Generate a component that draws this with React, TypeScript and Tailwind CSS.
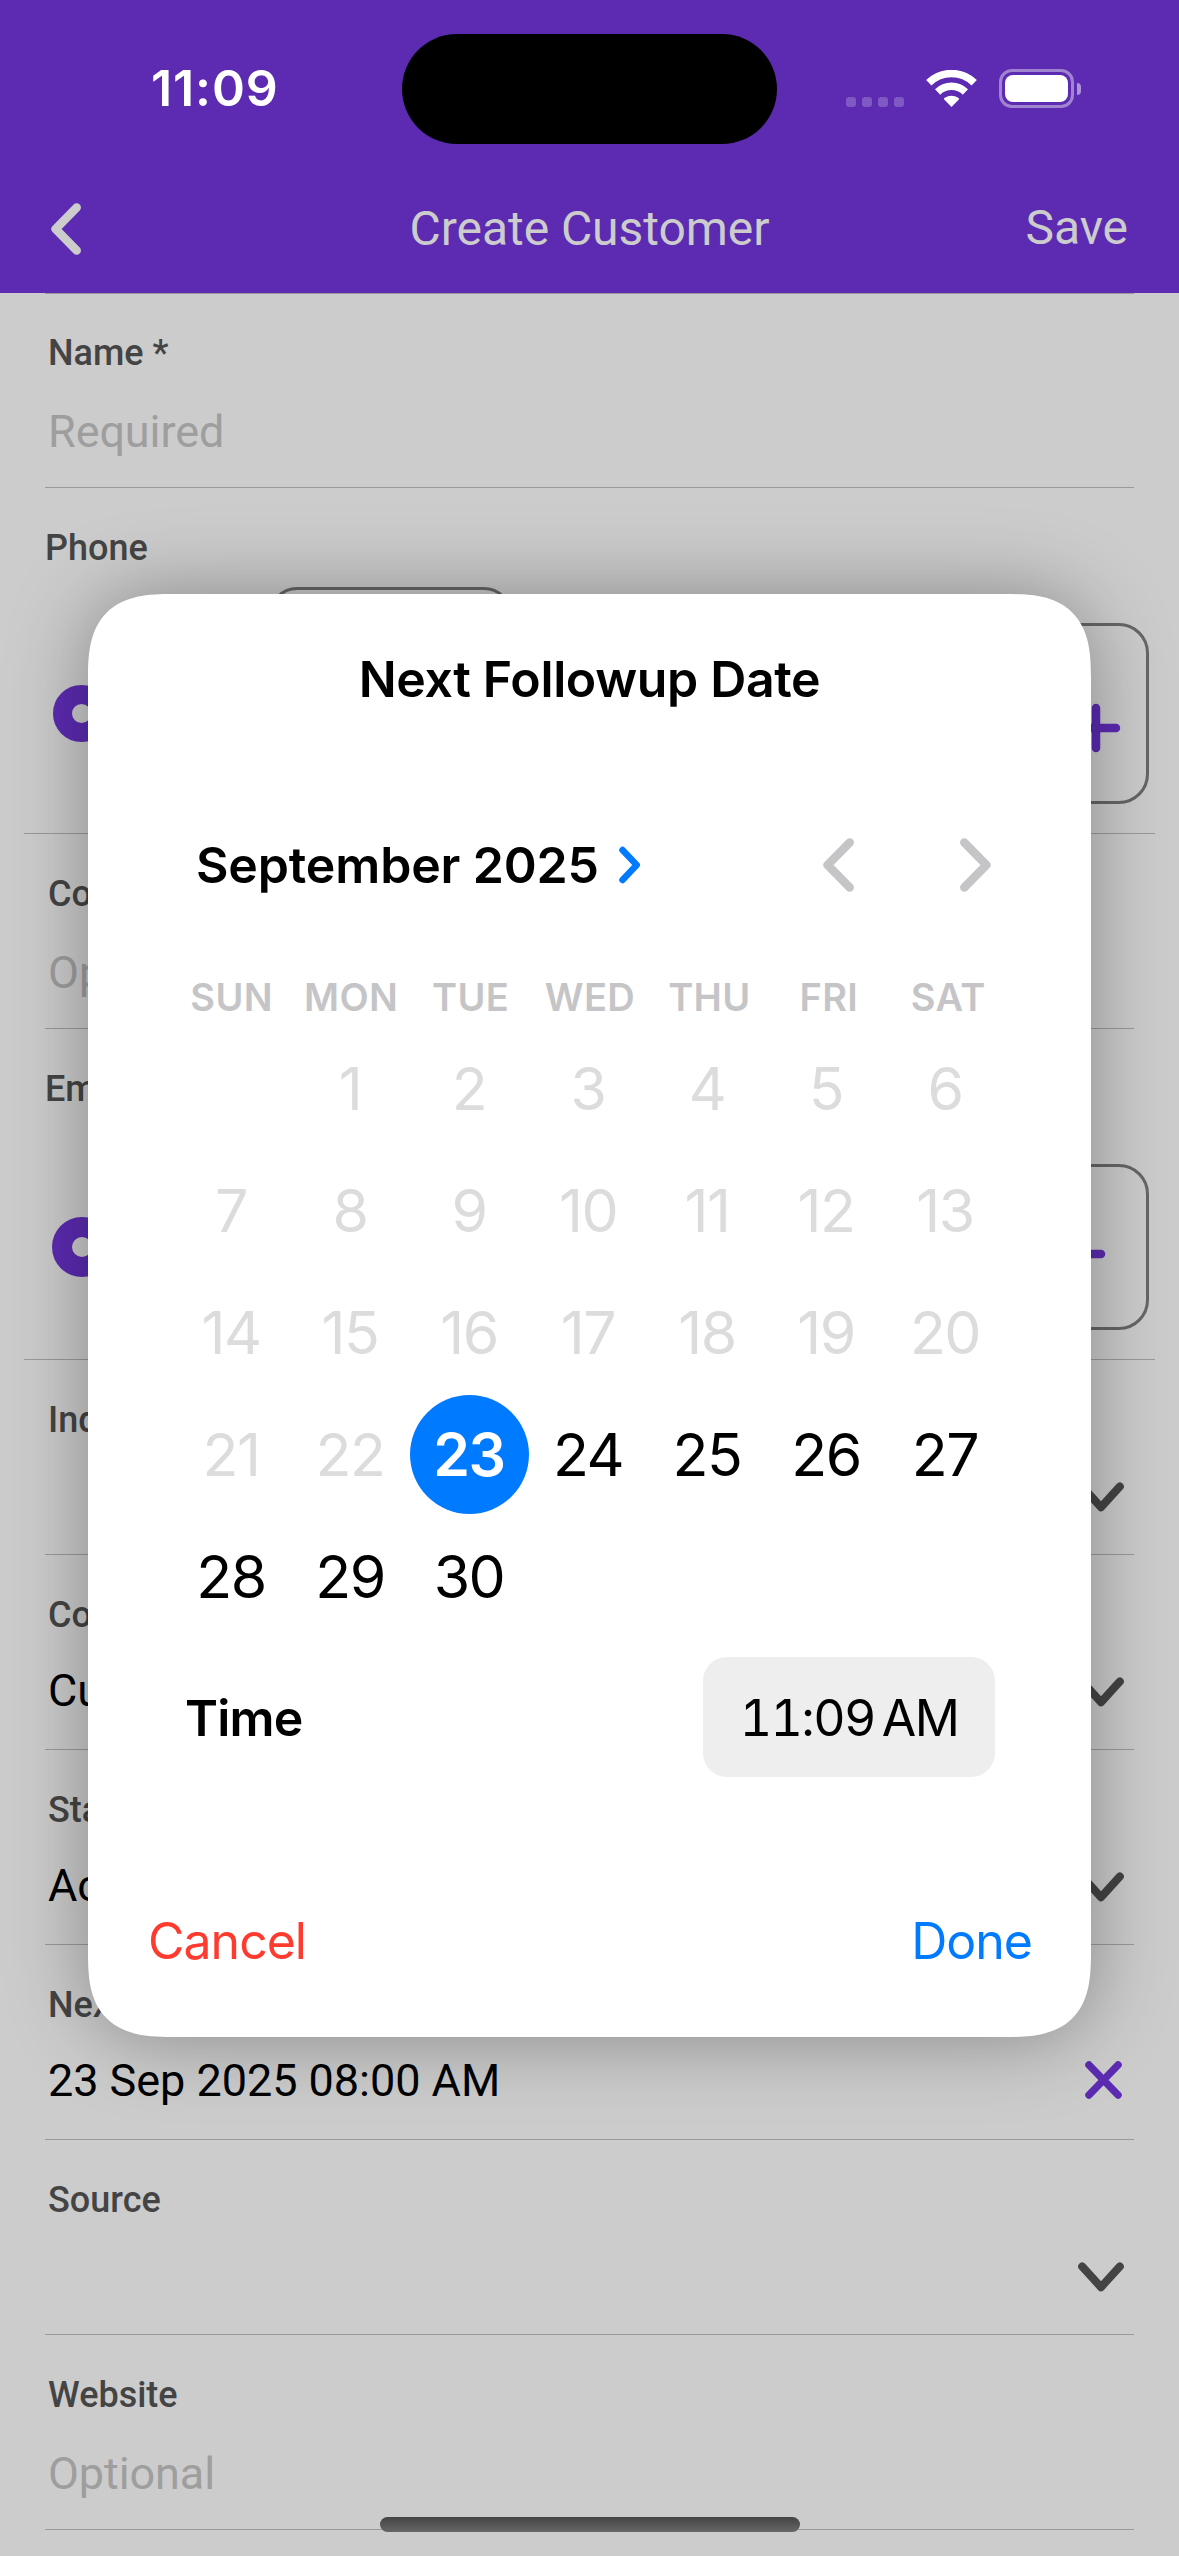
import type { ReactNode } from "react";

const WEEKDAYS = ["SUN", "MON", "TUE", "WED", "THU", "FRI", "SAT"];
const TODAY = 23;
const DAYS: (number | null)[] = [null, ...Array.from({ length: 30 }, (_, i) => i + 1)];

function StatusBar() {
  return (
    <div className="grid h-[177px] grid-cols-[402px_375px_402px] items-center font-[Inter]">
      <div className="pb-[2px] pl-[151px] text-[50px] leading-[60px] font-semibold tracking-[0.9px] text-white">11:09</div>
      <div className="mt-px h-[110px] rounded-full bg-black" />
      <div className="flex h-[39px] items-center pl-[69px]">
        <div className="flex gap-[6px] self-end pb-px">
          {[0, 1, 2, 3].map((i) => (
            <span key={i} className="size-[10px] rounded-[3px] bg-white/22" />
          ))}
        </div>
        <svg className="ml-[22px] h-[37px] w-[51px]" viewBox="0 0 51 37" fill="none">
          <path d="M2.8 12.8A32.5 32.5 0 0 1 48.2 12.8" stroke="white" strokeWidth="7.6" />
          <path d="M11.6 22A19.8 19.8 0 0 1 39.4 22" stroke="white" strokeWidth="7.4" />
          <path d="M25.5 37L18.2 29.6Q17.6 28.8 18.4 28.1Q25.5 23.4 32.6 28.1Q33.4 28.8 32.8 29.6Z" fill="white" />
        </svg>
        <div className="ml-[22px] h-[39px] w-[75px] rounded-[13px] border-[3px] border-white/42 p-[3px]">
          <div className="h-full w-full rounded-[8px] bg-white" />
        </div>
        <div className="ml-[3px] h-[12px] w-[4px] rounded-r-full bg-white/50" />
      </div>
    </div>
  );
}

function NavBar() {
  return (
    <div className="grid h-[116px] grid-cols-[260px_1fr_260px] items-center pb-3 text-[48px] leading-[56px] tracking-[-0.05px] text-[#cccccc]">
      <svg className="ml-[51px] h-[52px] w-[30px]" viewBox="0 0 30 52" fill="none" stroke="currentColor" strokeWidth="8.5" strokeLinecap="round" strokeLinejoin="round">
        <path d="M25.7 4.5L4.6 26L25.7 47.5" />
      </svg>
      <div className="text-center">Create Customer</div>
      <div className="pr-[51px] pb-[2px] text-right">Save</div>
    </div>
  );
}

function ChevronDown() {
  return (
    <svg className="mt-[12px] mr-[55px] h-[30px] w-[46px]" viewBox="0 0 46 30" fill="none" stroke="#444444" strokeWidth="8" strokeLinecap="round" strokeLinejoin="round">
      <path d="M4.2 4.5L23 25.2L41.8 4.5" />
    </svg>
  );
}

function ClearIcon() {
  return (
    <svg className="mt-[6px] mr-[57px] h-[38px] w-[37px]" viewBox="0 0 37 38" fill="none" stroke="#5c2bb2" strokeWidth="7.5" strokeLinecap="round">
      <path d="M4 4L33 34M33 4L4 34" />
    </svg>
  );
}

function Field({ label, placeholder, value, icon, first }: { label: string; placeholder?: string; value?: string; icon?: ReactNode; first?: boolean }) {
  return (
    <div className={first ? "h-[194px]" : "h-[195px]"}>
      <div className="mx-[45px] h-px bg-[#9a9a9a]" />
      <div className={`pl-[48px] text-[36px] leading-[42px] font-medium text-[#444444] ${first ? "pt-[38px]" : "pt-[39px]"}`}>{label}</div>
      <div className="flex h-[90px] items-start justify-between pt-[29px] pl-[48px] text-[45px] leading-[52px]">
        {placeholder ? <span className="pt-[3px] tracking-[-0.1px] text-[#9e9e9e]">{placeholder}</span> : <span className="tracking-[-0.04px] text-black">{value}</span>}
        {icon}
      </div>
    </div>
  );
}

function Radio({ large }: { large?: boolean }) {
  return large ? (
    <div className="ml-[28px] size-[60px] rounded-full border-[20.5px] border-[#5c2bb2]" />
  ) : (
    <div className="ml-[29px] size-[57px] rounded-full border-[19px] border-[#5c2bb2]" />
  );
}

function AddIcon() {
  return (
    <svg className="size-[50px]" viewBox="0 0 50 50" fill="none" stroke="#5c2bb2" strokeWidth="8.5" strokeLinecap="round">
      <path d="M25 5V45M5 25H45" />
    </svg>
  );
}

function Form() {
  return (
    <div>
      <Field first label="Name *" placeholder="Required" />
      <div className="h-[346px] overflow-hidden">
        <div className="mx-[45px] h-px bg-[#9a9a9a]" />
        <div className="pt-[39px] pl-[45px] text-[36px] leading-[42px] font-medium text-[#444444]">Phone</div>
        <div className="mx-6 mt-[18px] flex h-[253px] items-center">
          <Radio />
          <div className="ml-[159px] h-full w-[243px] rounded-[28px] border-[3px] border-[#666666]" />
          <div className="mr-[6px] ml-auto flex h-[181px] w-[106px] items-center justify-center rounded-[30px] border-[3px] border-[#666666] pt-[29px]">
            <AddIcon />
          </div>
        </div>
      </div>
      <div className="h-[195px]">
        <div className="mx-6 h-px bg-[#9a9a9a]" />
        <div className="pt-[39px] pl-[48px] text-[36px] leading-[42px] font-medium text-[#444444]">Company</div>
        <div className="pt-[32px] pl-[48px] text-[45px] leading-[52px] text-[#9e9e9e]">Optional</div>
      </div>
      <div className="h-[331px]">
        <div className="mx-[45px] h-px bg-[#9a9a9a]" />
        <div className="pt-[39px] pl-[45px] text-[36px] leading-[42px] font-medium text-[#444444]">Email</div>
        <div className="mx-6 mt-[54px] flex h-[166px] items-center">
          <Radio large />
          <div className="mr-[6px] ml-auto flex h-full w-[136px] items-center justify-center rounded-[30px] border-[3px] border-[#666666] pt-[14px]">
            <AddIcon />
          </div>
        </div>
      </div>
      <div className="h-[195px]">
        <div className="mx-6 h-px bg-[#9a9a9a]" />
        <div className="pt-[39px] pl-[48px] text-[36px] leading-[42px] font-medium text-[#444444]">Industry</div>
        <div className="flex justify-end pt-[29px]">
          <ChevronDown />
        </div>
      </div>
      <Field label="Contact Type" value="Customer" icon={<ChevronDown />} />
      <Field label="Status" value="Active" icon={<ChevronDown />} />
      <Field label="Next Followup Date" value="23 Sep 2025 08:00 AM" icon={<ClearIcon />} />
      <Field label="Source" value="" icon={<ChevronDown />} />
      <Field label="Website" placeholder="Optional" />
      <div className="mx-[45px] h-px bg-[#9a9a9a]" />
    </div>
  );
}

function Day({ day }: { day: number | null }) {
  if (day === null) return <span />;
  if (day === TODAY) {
    return (
      <div className="flex h-[122px] items-start justify-center pt-px">
        <span className="flex size-[119px] shrink-0 items-center justify-center rounded-full bg-[#007aff] pr-px font-semibold text-white">{day}</span>
      </div>
    );
  }
  return (
    <div className={`flex h-[122px] items-start justify-center pt-px pr-px leading-[119px] ${day < TODAY ? "text-[#dcdcdc]" : "text-black"}`}>{day}</div>
  );
}

function DatePickerDialog() {
  return (
    <div className="absolute top-[594px] left-[88px] flex h-[1443px] w-[1003px] flex-col rounded-[63px] bg-white pt-[55px] font-[Inter] text-[50px] leading-[60px] text-black shadow-[0_0_80px_rgba(0,0,0,0.34)] supports-[corner-shape:squircle]:rounded-[85px] supports-[corner-shape:squircle]:[corner-shape:superellipse(1.485)]">
      <h2 className="text-center font-semibold tracking-[-0.35px]">Next Followup Date</h2>
      <div className="mt-[126px] flex items-center pr-[100px] pl-[108px]">
        <span className="font-semibold tracking-[-0.15px]">September 2025</span>
        <svg className="ml-[20px] h-[38px] w-[22px]" viewBox="0 0 22 38" fill="none" stroke="#007aff" strokeWidth="6.5" strokeLinecap="round" strokeLinejoin="round">
          <path d="M3.5 4L17.7 19L3.5 34" />
        </svg>
        <div className="ml-auto flex gap-[106px]">
          <svg className="h-[54px] w-[31px]" viewBox="0 0 31 54" fill="none" stroke="#c5c5c7" strokeWidth="8.5" strokeLinecap="round" strokeLinejoin="round">
            <path d="M26.7 4.6L4.6 27L26.7 49.4" />
          </svg>
          <svg className="h-[54px] w-[31px]" viewBox="0 0 31 54" fill="none" stroke="#c5c5c7" strokeWidth="8.5" strokeLinecap="round" strokeLinejoin="round">
            <path d="M4.3 4.6L26.4 27L4.3 49.4" />
          </svg>
        </div>
      </div>
      <div className="mt-[79px] mr-[83px] ml-[84px] grid grid-cols-7 text-center text-[38px] leading-[46px] font-semibold tracking-[0.4px] text-[#c5c5c7]">
        {WEEKDAYS.map((d) => (
          <span key={d}>{d}</span>
        ))}
      </div>
      <div className="mt-[8px] ml-[84px] grid grid-cols-[repeat(7,119px)] text-[59px] tracking-[-1.5px]">
        {DAYS.map((d, i) => (
          <Day key={i} day={d} />
        ))}
      </div>
      <div className="mt-[19px] flex h-[120px] items-center justify-between pr-[96px] pl-[97px]">
        <span className="pt-[2px] font-semibold tracking-[-0.8px]">Time</span>
        <span className="flex h-full w-[292px] items-center justify-center rounded-[24px] bg-[#eeeeef] pt-[2px] tracking-[-1.6px] tabular-nums">
          11:09<span className="ml-[7px]">AM</span>
        </span>
      </div>
      <div className="mt-[134px] flex justify-between pr-[59px] pl-[60px]">
        <span className="tracking-[-1px] text-[#ff3b30]">Cancel</span>
        <span className="tracking-[-1px] text-[#007aff]">Done</span>
      </div>
    </div>
  );
}

export default function App() {
  return (
    <div className="relative h-[2556px] w-[1179px] overflow-hidden bg-[#cccccc] font-[Roboto]">
      <header className="h-[293px] bg-[#5c2bb2]">
        <StatusBar />
        <NavBar />
      </header>
      <Form />
      <DatePickerDialog />
      <div className="absolute bottom-[24px] left-[380px] h-[15px] w-[420px] rounded-full bg-linear-to-b from-[#444444] to-[#666666]" />
    </div>
  );
}
